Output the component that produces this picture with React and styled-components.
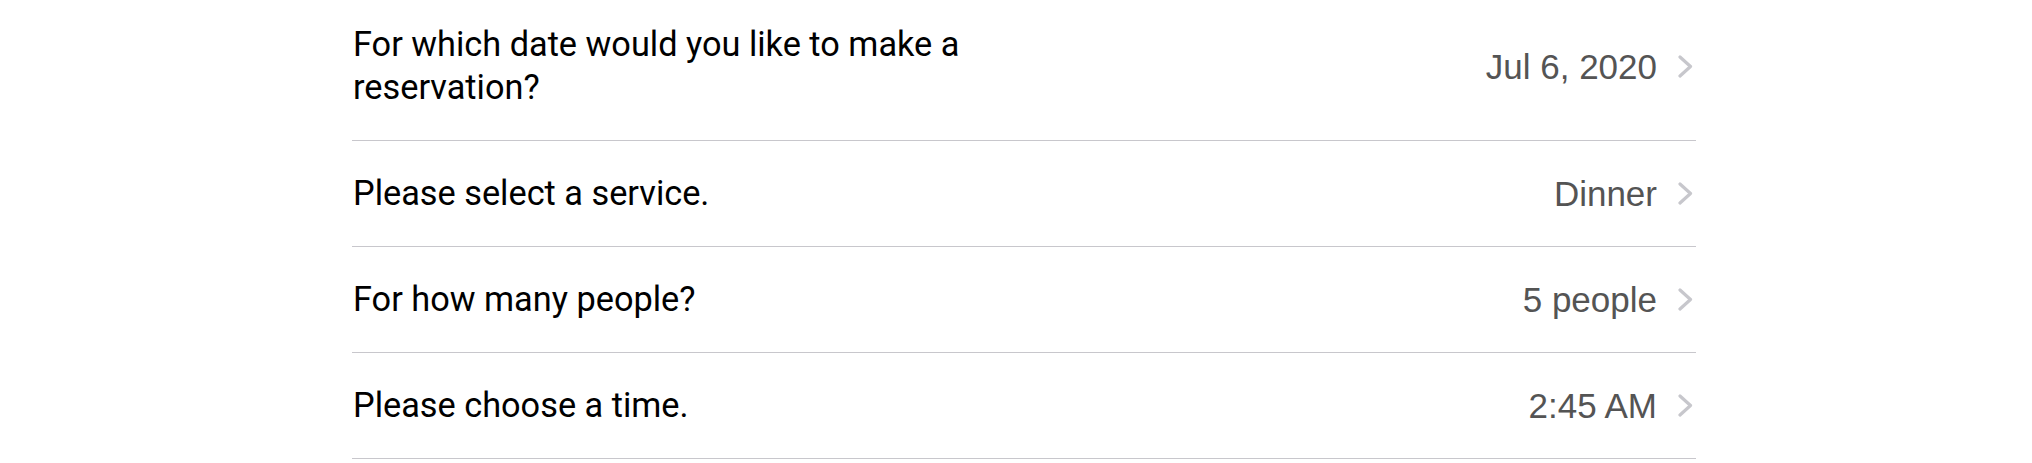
import React from "react";
import styled, { createGlobalStyle } from "styled-components";

const GlobalStyle = createGlobalStyle`
  html, body {
    margin: 0;
    padding: 0;
    background: #ffffff;
    overflow: hidden;
  }
`;

const Page = styled.div`
  padding-left: 352px;
  margin-top: -8px;
`;

const List = styled.ul`
  list-style: none;
  margin: 0;
  padding: 0;
  width: 1344px;
`;

const Row = styled.li`
  display: flex;
  align-items: center;
  justify-content: space-between;
  padding: 31px 0 31px 1px;
  border-bottom: 1px solid #c8c7cc;
`;

const Label = styled.span`
  max-width: 660px;
  font-family: Roboto, "Noto Sans", sans-serif;
  font-size: 34.3px;
  line-height: 43px;
  color: #000000;
`;

const Detail = styled.div`
  display: flex;
  align-items: center;
  gap: 21px;
  padding-right: 3px;
`;

const Value = styled.span`
  font-family: "Liberation Sans", Arial, sans-serif;
  font-size: 35px;
  line-height: 43px;
  color: #545454;
`;

const Chevron = () => (
  <svg width="15" height="23" viewBox="0 0 15 23" fill="none">
    <path
      d="M2 2 L12.5 11.5 L2 21"
      stroke="#c7c7cc"
      strokeWidth="3.2"
      strokeLinecap="round"
      strokeLinejoin="round"
    />
  </svg>
);

const rows = [
  { label: "For which date would you like to make a reservation?", value: "Jul 6, 2020" },
  { label: "Please select a service.", value: "Dinner" },
  { label: "For how many people?", value: "5 people" },
  { label: "Please choose a time.", value: "2:45 AM" },
];

function App() {
  return (
    <>
      <GlobalStyle />
      <Page>
        <List>
          {rows.map((r) => (
            <Row key={r.label}>
              <Label>{r.label}</Label>
              <Detail>
                <Value>{r.value}</Value>
                <Chevron />
              </Detail>
            </Row>
          ))}
        </List>
      </Page>
    </>
  );
}

export default App;
